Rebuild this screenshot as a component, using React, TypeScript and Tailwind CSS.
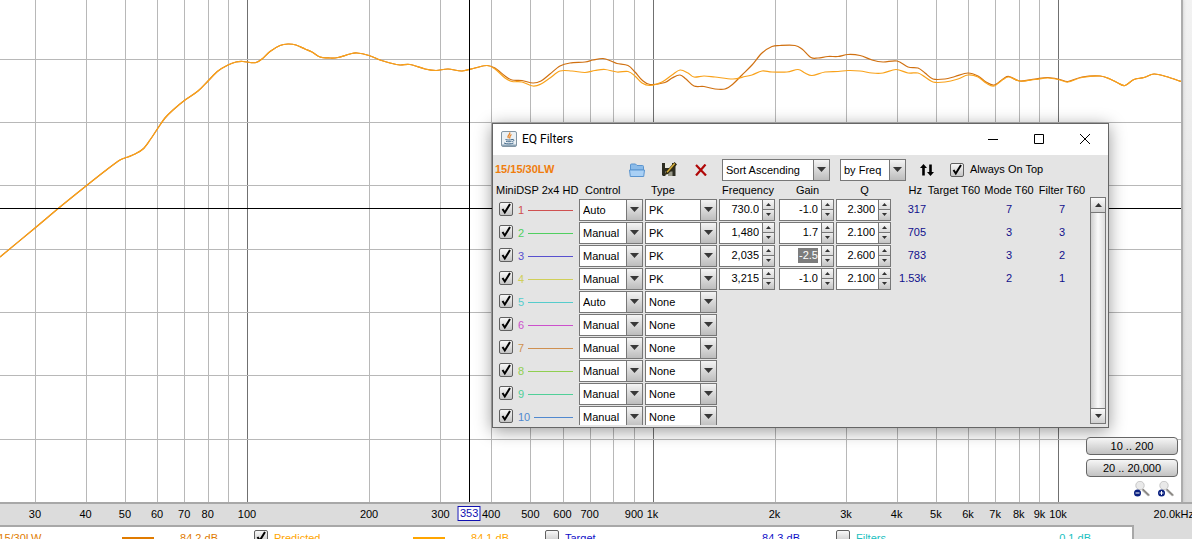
import { ReactNode } from "react";

type Point = [number, number];

const PLOT_WIDTH = 1181;
const PLOT_HEIGHT = 502;

// log frequency axis, 405.5 units per decade
const freqToX = (freq: number) => 247 + 405.5 * Math.log10(freq / 100);

const gridFreqs = [
  30, 40, 50, 60, 70, 80, 90, 100, 200, 300, 400, 500, 600, 700, 800, 900, 1000,
  2000, 3000, 4000, 5000, 6000, 7000, 8000, 9000, 10000,
];
const majorFreqs = [100, 1000, 10000];
const gridLevels = [59, 122, 185, 249, 312, 375, 439];

const axisLabels: [number, string][] = [
  [30, "30"], [40, "40"], [50, "50"], [60, "60"], [70, "70"], [80, "80"],
  [100, "100"], [200, "200"], [300, "300"], [400, "400"], [500, "500"],
  [600, "600"], [700, "700"], [900, "900"], [1000, "1k"], [2000, "2k"],
  [3000, "3k"], [4000, "4k"], [5000, "5k"], [6000, "6k"], [7000, "7k"],
  [8000, "8k"], [9000, "9k"], [10000, "10k"], [19300, "20.0kHz"],
];

const lowEnd: Point[] = [
  [0, 257], [35, 228], [60, 207], [86, 186], [105, 171], [120, 160], [128, 157],
  [135, 154], [143, 149], [150, 140], [158, 128], [165, 118], [173, 110],
  [185, 100], [198, 91], [208, 81], [218, 71], [228, 65], [236, 62], [243, 61.5],
  [250, 62.5], [256, 62.5], [262, 59], [270, 51.5], [280, 45.5], [288, 44],
  [296, 45], [305, 49], [312, 52], [320, 57], [330, 58], [338, 57.5], [350, 54],
  [357, 53], [369, 55.5], [380, 60], [390, 63], [400, 65], [410, 64.5],
  [425, 69], [436, 70.5], [448, 69], [462, 71], [475, 68], [487, 65.5],
];

const measured: Point[] = [
  ...lowEnd,
  [495, 68], [505, 76], [512, 80], [522, 80.5], [533, 83], [541, 81], [550, 74],
  [560, 66], [570, 63], [585, 62], [593, 60], [603, 58.5], [611, 61], [617, 63.5],
  [628, 65.5], [635, 72], [642, 80], [650, 84.5], [665, 82.5], [672, 78],
  [680, 75], [686, 79], [694, 86], [704, 86.5], [715, 89], [725, 89], [733, 84],
  [742, 75], [752, 65], [762, 53], [772, 46.5], [780, 45.5], [795, 45.5],
  [802, 49], [811, 57.5], [818, 58], [828, 56.5], [838, 56.5], [848, 54.5],
  [860, 55.5], [872, 60], [883, 62], [897, 61], [908, 67], [918, 68], [925, 73],
  [933, 79], [945, 79], [955, 76.5], [968, 73], [978, 76], [986, 82], [994, 85],
  [1003, 79], [1009, 76.5], [1020, 81], [1035, 79], [1048, 77.5], [1060, 79.5],
  [1068, 81.5], [1082, 77], [1100, 76], [1110, 79], [1118, 83], [1125, 85.5],
  [1134, 79.5], [1144, 77.5], [1154, 74], [1166, 76.5], [1181, 81.5],
];

const predicted: Point[] = [
  ...lowEnd,
  [495, 69], [505, 78], [512, 81.5], [522, 82], [533, 86], [541, 84], [550, 78],
  [560, 71], [572, 71], [585, 72.5], [595, 70.5], [605, 69.5], [617, 72],
  [628, 71.5], [635, 76], [642, 83], [650, 85.5], [662, 82], [672, 75],
  [680, 70], [688, 73], [694, 77], [704, 76], [715, 77], [733, 79], [745, 76.5],
  [752, 75], [762, 71], [772, 72], [787, 72], [798, 69.5], [805, 73], [812, 75.5],
  [825, 72], [838, 71.5], [848, 70.5], [860, 71], [872, 73], [883, 73],
  [896, 69.5], [908, 73], [918, 73], [925, 77], [933, 82], [945, 82], [958, 79],
  [968, 75], [978, 77], [986, 83], [994, 86], [1003, 79.5], [1009, 77],
  [1020, 81], [1035, 79.5], [1048, 78], [1060, 80], [1068, 82], [1082, 77.5],
  [1100, 76], [1110, 79], [1118, 83], [1125, 85.5], [1134, 79.5], [1144, 77.5],
  [1154, 74], [1166, 76.5], [1181, 81.5],
];

function smoothPath(points: Point[]) {
  let d = `M${points[0][0]},${points[0][1]}`;
  for (let i = 0; i < points.length - 1; i++) {
    const p0 = points[i - 1] ?? points[i];
    const p1 = points[i];
    const p2 = points[i + 1];
    const p3 = points[i + 2] ?? p2;
    d += `C${p1[0] + (p2[0] - p0[0]) / 6},${p1[1] + (p2[1] - p0[1]) / 6} `;
    d += `${p2[0] - (p3[0] - p1[0]) / 6},${p2[1] - (p3[1] - p1[1]) / 6} `;
    d += `${p2[0]},${p2[1]}`;
  }
  return d;
}

interface Filter {
  id: number;
  color: string;
  control: string;
  type: string;
  freq?: string;
  gain?: string;
  q?: string;
  hz?: string;
  mode?: string;
  filter?: string;
  selected?: boolean;
}

const filters: Filter[] = [
  { id: 1, color: "text-[#cf5050]", control: "Auto", type: "PK", freq: "730.0", gain: "-1.0", q: "2.300", hz: "317", mode: "7", filter: "7" },
  { id: 2, color: "text-[#50cf60]", control: "Manual", type: "PK", freq: "1,480", gain: "1.7", q: "2.100", hz: "705", mode: "3", filter: "3" },
  { id: 3, color: "text-[#5850cf]", control: "Manual", type: "PK", freq: "2,035", gain: "-2.5", q: "2.600", hz: "783", mode: "3", filter: "2", selected: true },
  { id: 4, color: "text-[#d0cf58]", control: "Manual", type: "PK", freq: "3,215", gain: "-1.0", q: "2.100", hz: "1.53k", mode: "2", filter: "1" },
  { id: 5, color: "text-[#55cccc]", control: "Auto", type: "None" },
  { id: 6, color: "text-[#cc50cc]", control: "Manual", type: "None" },
  { id: 7, color: "text-[#cf9050]", control: "Manual", type: "None" },
  { id: 8, color: "text-[#90cf50]", control: "Manual", type: "None" },
  { id: 9, color: "text-[#50cf98]", control: "Manual", type: "None" },
  { id: 10, color: "text-[#5088cf]", control: "Manual", type: "None" },
];

function Checkbox({ label, checked = true }: { label: string; checked?: boolean }) {
  return (
    <span className="relative block h-3.5 w-3.5 shrink-0">
      <input
        type="checkbox"
        aria-label={label}
        defaultChecked={checked}
        className="peer block h-3.5 w-3.5 appearance-none rounded-xs border border-[#606060] bg-linear-to-b from-[#f8f8f8] to-[#c4c4c4]"
      />
      <svg
        viewBox="0 0 14 14"
        className="pointer-events-none absolute inset-0 hidden peer-checked:block"
        fill="none"
        stroke="#000"
      >
        <path d="M3.5 7l2.3 3.5L11 2" strokeWidth="2" />
      </svg>
    </span>
  );
}

function Combo({ label, value, options }: { label: string; value: string; options: string[] }) {
  return (
    <span className="relative block h-[22px] w-full">
      <select
        aria-label={label}
        defaultValue={value}
        className="block h-full w-full appearance-none border border-[#777] bg-white pt-px pr-4 pl-[3px] text-[11px] text-black"
      >
        {options.map((option) => (
          <option key={option}>{option}</option>
        ))}
      </select>
      <span className="pointer-events-none absolute inset-y-0 right-0 flex w-[17px] items-center justify-center border border-[#777] bg-linear-to-b from-[#f4f4f4] to-[#bdbdbd]">
        <svg width="9" height="5" viewBox="0 0 9 5">
          <path d="M0 0h9L4.5 5z" fill="#383838" />
        </svg>
      </span>
    </span>
  );
}

function Spinner({ label, value, selected }: { label: string; value: string; selected?: boolean }) {
  return (
    <span className="flex h-[22px] w-full border border-[#777] bg-white">
      <span className="flex min-w-0 flex-1 items-center justify-end pr-[3px] pb-px">
        <input
          type="text"
          aria-label={label}
          defaultValue={value}
          className={
            selected
              ? "block h-[15px] w-5 bg-[#7d7d7d] text-right text-[11px] text-white"
              : "block h-[15px] w-full min-w-0 text-right text-[11px] text-black"
          }
        />
      </span>
      <span className="flex w-[12px] flex-col border-l border-[#777]">
        <button
          aria-label={`Increase ${label}`}
          className="flex flex-1 items-center justify-center border-b border-[#777] bg-linear-to-b from-[#f8f8f8] to-[#dadada]"
        >
          <svg width="5" height="3" viewBox="0 0 5 3">
            <path d="M0 3h5L2.5 0z" fill="#333" />
          </svg>
        </button>
        <button
          aria-label={`Decrease ${label}`}
          className="flex flex-1 items-center justify-center bg-linear-to-b from-[#ececec] to-[#c4c4c4]"
        >
          <svg width="5" height="3" viewBox="0 0 5 3">
            <path d="M0 0h5L2.5 3z" fill="#333" />
          </svg>
        </button>
      </span>
    </span>
  );
}

function JavaIcon() {
  return (
    <svg width="16" height="16" viewBox="0 0 16 16" fill="none">
      <rect x=".5" y=".5" width="15" height="15" rx="1.5" fill="#eaf0f4" stroke="#8295a3" />
      <path d="M1 13.500h14V15H1z" fill="#8ba3b5" />
      <path d="M8.500 1.500c1.500 2-3.200 3-1 5.500M10.500 3.500c-2.500 1.500-1 2-2 4" stroke="#e8862a" strokeWidth="1.300" />
      <path d="M4.500 8.500c2 .7 4.500.7 6.500 0M5 10.300c2 .6 4 .6 5.500 0M3 12c2.500 1.200 7 1.200 9.500 0M11 8.500c2.500-.6 2.500 1.500.3 2" stroke="#42698a" />
    </svg>
  );
}

function FolderIcon() {
  return (
    <svg width="16" height="14" viewBox="0 0 16 14">
      <path d="M1.500 12V2q0-1 1-1h4l1.500 1.500h5.500q1 0 1 1V7h-13z" fill="#8bbbe9" stroke="#5a94cf" />
      <path d="M.5 7h15l-.8 6.500H1.300z" fill="#a9d0f5" stroke="#5a94cf" />
    </svg>
  );
}

function SaveAsIcon() {
  return (
    <svg width="16" height="15" viewBox="0 0 16 15">
      <path d="M1 1h13.500v13H2L1 13z" fill="#2d2d22" />
      <path d="M4 1h7v5H4z" fill="#e8e8e0" />
      <path d="M4 9.500h7.500V14H4z" fill="#99998a" />
      <path d="M5 10h2v4H5z" fill="#eee" />
      <path d="M13.500 0L16 2.500 7 12l-3.500 1L5 9.500z" fill="#302a12" />
      <path d="M13.700 1.500L6 10.200" stroke="#d9b13c" strokeWidth="1.500" />
    </svg>
  );
}

function MagnifierIcon({ plus }: { plus?: boolean }) {
  return (
    <svg width="16" height="16" viewBox="0 0 16 16" fill="none">
      <path d="M8.500 8.500l6.500 6" stroke="#b5b5b5" strokeWidth="2.500" />
      <path d="M8.500 8l6.500 6.500" stroke="#665f55" />
      <circle cx="6" cy="4.500" r="4.200" fill="#e9e9e9" stroke="#c7c7c7" />
      <circle cx="3.500" cy="12" r="3.500" fill="#0a2080" />
      <path d={plus ? "M1.500 12h4M3.500 10v4" : "M1.500 12h4"} stroke="#fff" />
    </svg>
  );
}

function WindowButton({ label, children }: { label: string; children: ReactNode }) {
  return (
    <button aria-label={label} className="flex h-full w-[46px] items-center justify-center">
      <svg width="10" height="10" viewBox="0 0 10 10" fill="none" stroke="#000">
        {children}
      </svg>
    </button>
  );
}

function FilterTable() {
  return (
    <table className="w-[595px] table-fixed border-collapse">
      <colgroup>
        <col className="w-[86px]" />
        <col className="w-[66px]" />
        <col className="w-[74px]" />
        <col className="w-[60px]" />
        <col className="w-[57px]" />
        <col className="w-[57px]" />
        <col className="w-[33px]" />
        <col className="w-[56px]" />
        <col className="w-[54px]" />
        <col className="w-[52px]" />
      </colgroup>
      <thead>
        <tr className="h-4 text-left leading-4 whitespace-nowrap [&>th]:p-0 [&>th]:font-normal">
          <th className="indent-[3px]">MiniDSP 2x4 HD</th>
          <th className="indent-[6px]">Control</th>
          <th className="indent-[6px]">Type</th>
          <th className="indent-[3px]">Frequency</th>
          <th className="text-center">Gain</th>
          <th className="text-center">Q</th>
          <th className="pr-1! text-right">Hz</th>
          <th className="text-center">Target T60</th>
          <th className="text-center">Mode T60</th>
          <th className="text-center">Filter T60</th>
        </tr>
      </thead>
      <tbody>
        {filters.map((f) => (
          <tr key={f.id} className="h-[23px] text-[#10108c] [&>td]:p-0">
            <td>
              <div className={`flex items-start gap-1 pr-[6px] pl-[6px] leading-4 ${f.color}`}>
                <Checkbox label={`Enable filter ${f.id}`} />
                <span className="pl-px">{f.id}</span>
                <span className="mt-2 flex-1 border-t border-current" />
              </div>
            </td>
            <td className="pr-0.5!">
              <Combo label={`Control ${f.id}`} value={f.control} options={["Auto", "Manual"]} />
            </td>
            <td className="pr-0.5!">
              <Combo label={`Type ${f.id}`} value={f.type} options={["None", "PK"]} />
            </td>
            <td className="pr-1!">
              {f.freq && <Spinner label={`Frequency ${f.id}`} value={f.freq} />}
            </td>
            <td className="pr-0.5!">
              {f.gain && <Spinner label={`Gain ${f.id}`} value={f.gain} selected={f.selected} />}
            </td>
            <td className="pr-0.5!">{f.q && <Spinner label={`Q ${f.id}`} value={f.q} />}</td>
            <td className="text-right">
              <span className="-ml-2">{f.hz}</span>
            </td>
            <td />
            <td className="text-center">{f.mode}</td>
            <td className="text-center">{f.filter}</td>
          </tr>
        ))}
      </tbody>
    </table>
  );
}

function ScrollBar() {
  return (
    <div className="mt-[15px] mb-px flex w-4 flex-col border border-[#777] bg-linear-to-r from-[#cfcfcf] via-[#fafafa] to-[#dedede]">
      <button aria-label="Scroll up" className="flex h-[15px] items-center justify-center border-b border-[#777] bg-linear-to-b from-[#fafafa] to-[#d0d0d0]">
        <svg width="7" height="4" viewBox="0 0 7 4">
          <path d="M0 4h7L3.500 0z" fill="#333" />
        </svg>
      </button>
      <div className="flex-1" />
      <button aria-label="Scroll down" className="flex h-[15px] items-center justify-center border-t border-[#777] bg-linear-to-b from-[#fafafa] to-[#d0d0d0]">
        <svg width="7" height="4" viewBox="0 0 7 4">
          <path d="M0 0h7L3.500 4z" fill="#333" />
        </svg>
      </button>
    </div>
  );
}

function FilterDialog() {
  return (
    <section
      role="dialog"
      aria-label="EQ Filters"
      className="absolute top-[123px] left-[492px] w-[617px] border border-[#666] bg-[#e4e4e4] shadow-[0_3px_16px_rgba(0,0,0,0.4)]"
    >
      <header className="flex h-[31px] items-center bg-white pb-0.5 pl-2">
        <JavaIcon />
        <h1 className="flex-1 pl-[5px] font-[Roboto,sans-serif] text-[12px] leading-4 text-black">
          EQ Filters
        </h1>
        <WindowButton label="Minimize">
          <path d="M0 5.500h10" />
        </WindowButton>
        <WindowButton label="Maximize">
          <path d="M.5.5h9v9h-9z" />
        </WindowButton>
        <WindowButton label="Close">
          <path d="M0 0l10 10M10 0L0 10" />
        </WindowButton>
      </header>

      <div className="flex h-[27px] items-center pt-0.5 pl-[2px]">
        <span className="w-[134px] font-bold text-[#f07d0c]">15/15/30LW</span>
        <div className="flex w-[93px] items-center gap-4">
          <button aria-label="Open filters">
            <FolderIcon />
          </button>
          <button aria-label="Save filters">
            <SaveAsIcon />
          </button>
          <button aria-label="Delete filters" className="pl-0.5">
            <svg width="12" height="12" viewBox="0 0 12 12">
              <path d="M1 1l10 10.500M10.500.5L1 11.500" stroke="#b00808" strokeWidth="2.200" />
            </svg>
          </button>
        </div>
        <span className="w-[108px]">
          <Combo label="Sort order" value="Sort Ascending" options={["Sort Ascending", "Sort Descending"]} />
        </span>
        <span className="ml-2.5 w-[66px]">
          <Combo label="Sort by" value="by Freq" options={["by Freq", "by Gain"]} />
        </span>
        <button aria-label="Sort now" className="ml-3.5">
          <svg width="14" height="12" viewBox="0 0 14 12">
            <path d="M3.500 0L7 4H4.800v7.500H2.200V4H0zM10.500 12L7 8h2.200V.5h2.600V8H14z" fill="#000" />
          </svg>
        </button>
        <label className="ml-4 flex items-center gap-[6px]">
          <Checkbox label="Always On Top" />
          Always On Top
        </label>
      </div>

      <div className="flex h-[245px] gap-0.5 overflow-hidden pb-0.5">
        <div className="h-full overflow-hidden">
          <FilterTable />
        </div>
        <ScrollBar />
      </div>
    </section>
  );
}

function Plot() {
  return (
    <div className="relative min-h-0 flex-1 bg-linear-to-b from-[#f2f2f2] to-[#dadada] pr-[11px]">
      <div className="h-full bg-white shadow-[0_0_0_2px_#adadad,0_0_4px_1px_#aaa]">
        <svg
          className="block h-full w-full"
          viewBox={`0 0 ${PLOT_WIDTH} ${PLOT_HEIGHT}`}
          preserveAspectRatio="none"
          fill="none"
        >
          <g stroke="#b8b8b8" shapeRendering="crispEdges">
            {gridFreqs.map((freq) => (
              <path
                key={freq}
                d={`M${Math.round(freqToX(freq)) + 0.5} 0V${PLOT_HEIGHT}`}
                stroke={majorFreqs.includes(freq) ? "#707070" : undefined}
              />
            ))}
            {gridLevels.map((y) => (
              <path key={y} d={`M0 ${y + 0.5}H${PLOT_WIDTH}`} />
            ))}
          </g>
          <path d={smoothPath(measured)} stroke="#d07010" strokeWidth="1.200" />
          <path d={smoothPath(predicted)} stroke="#f9a21a" strokeWidth="1.200" />
          <path
            d={`M0 208.500H${PLOT_WIDTH}M469.500 0V${PLOT_HEIGHT}`}
            stroke="#000"
            shapeRendering="crispEdges"
          />
        </svg>
      </div>

      <FilterDialog />

      <div className="absolute right-3.5 bottom-[5px] flex w-[92px] flex-col gap-1">
        <button className="h-[18px] rounded-sm border border-[#666] bg-linear-to-b from-[#f6f6f6] to-[#c2c2c2] leading-4">
          10 .. 200
        </button>
        <button className="h-[18px] rounded-sm border border-[#666] bg-linear-to-b from-[#f6f6f6] to-[#c2c2c2] leading-4">
          20 .. 20,000
        </button>
        <div className="flex justify-end gap-2 pr-1">
          <button aria-label="Zoom out">
            <MagnifierIcon />
          </button>
          <button aria-label="Zoom in">
            <MagnifierIcon plus />
          </button>
        </div>
      </div>
    </div>
  );
}

function FrequencyAxis() {
  return (
    <div className="relative h-[23px] shrink-0 border-t-2 border-[#a8a8a8] bg-[#dcdcdc]">
      <div className="relative mr-[11px] h-full">
        {axisLabels.map(([freq, label]) => (
          <span
            key={label}
            className="absolute top-0.5 -translate-x-1/2 leading-4"
            style={{ left: `${(freqToX(freq) / PLOT_WIDTH) * 100}%` }}
          >
            {label}
          </span>
        ))}
        <span
          className="absolute top-0.5 w-[23px] -translate-x-1/2 border border-[#1010b0] bg-white text-center leading-[13px] text-[#1010b0]"
          style={{ left: `${(freqToX(353) / PLOT_WIDTH) * 100}%` }}
        >
          353
        </span>
      </div>
    </div>
  );
}

const traces = [
  { name: "15/15/30LW", color: "text-[#e07b00]", value: "84.2 dB", line: true, checked: true },
  { name: "Predicted", color: "text-[#ffa500]", value: "84.1 dB", line: true, checked: true },
  { name: "Target", color: "text-[#1010c8]", value: "84.3 dB", line: false, checked: false },
  { name: "Filters", color: "text-[#20bfbf]", value: "0.1 dB", line: false, checked: false },
];

function Legend() {
  return (
    <div className="h-3.5 shrink-0 overflow-hidden bg-[#dcdcdc] pr-[58px]">
      <div className="h-8 overflow-hidden border-t-2 border-r-2 border-[#a8a8a8] bg-white pt-[3px] pr-[5px]">
        <div className="-ml-[37px] grid grid-cols-4">
          {traces.map((trace) => (
            <div key={trace.name} className={`flex items-start ${trace.color}`}>
              <Checkbox label={trace.name} checked={trace.checked} />
              <span className="w-[139px] pl-[6px] leading-4">{trace.name}</span>
              <span className="flex h-4 w-[38px] items-center pl-[6px]">
                {trace.line && <span className="h-0.5 w-full bg-current" />}
              </span>
              <span className="w-[64px] text-right leading-4">{trace.value}</span>
            </div>
          ))}
        </div>
      </div>
    </div>
  );
}

export default function App() {
  return (
    <main className="flex h-screen flex-col overflow-hidden bg-[#dcdcdc] font-['Liberation_Sans',Arial,sans-serif] text-[11px] text-black">
      <Plot />
      <FrequencyAxis />
      <Legend />
    </main>
  );
}
